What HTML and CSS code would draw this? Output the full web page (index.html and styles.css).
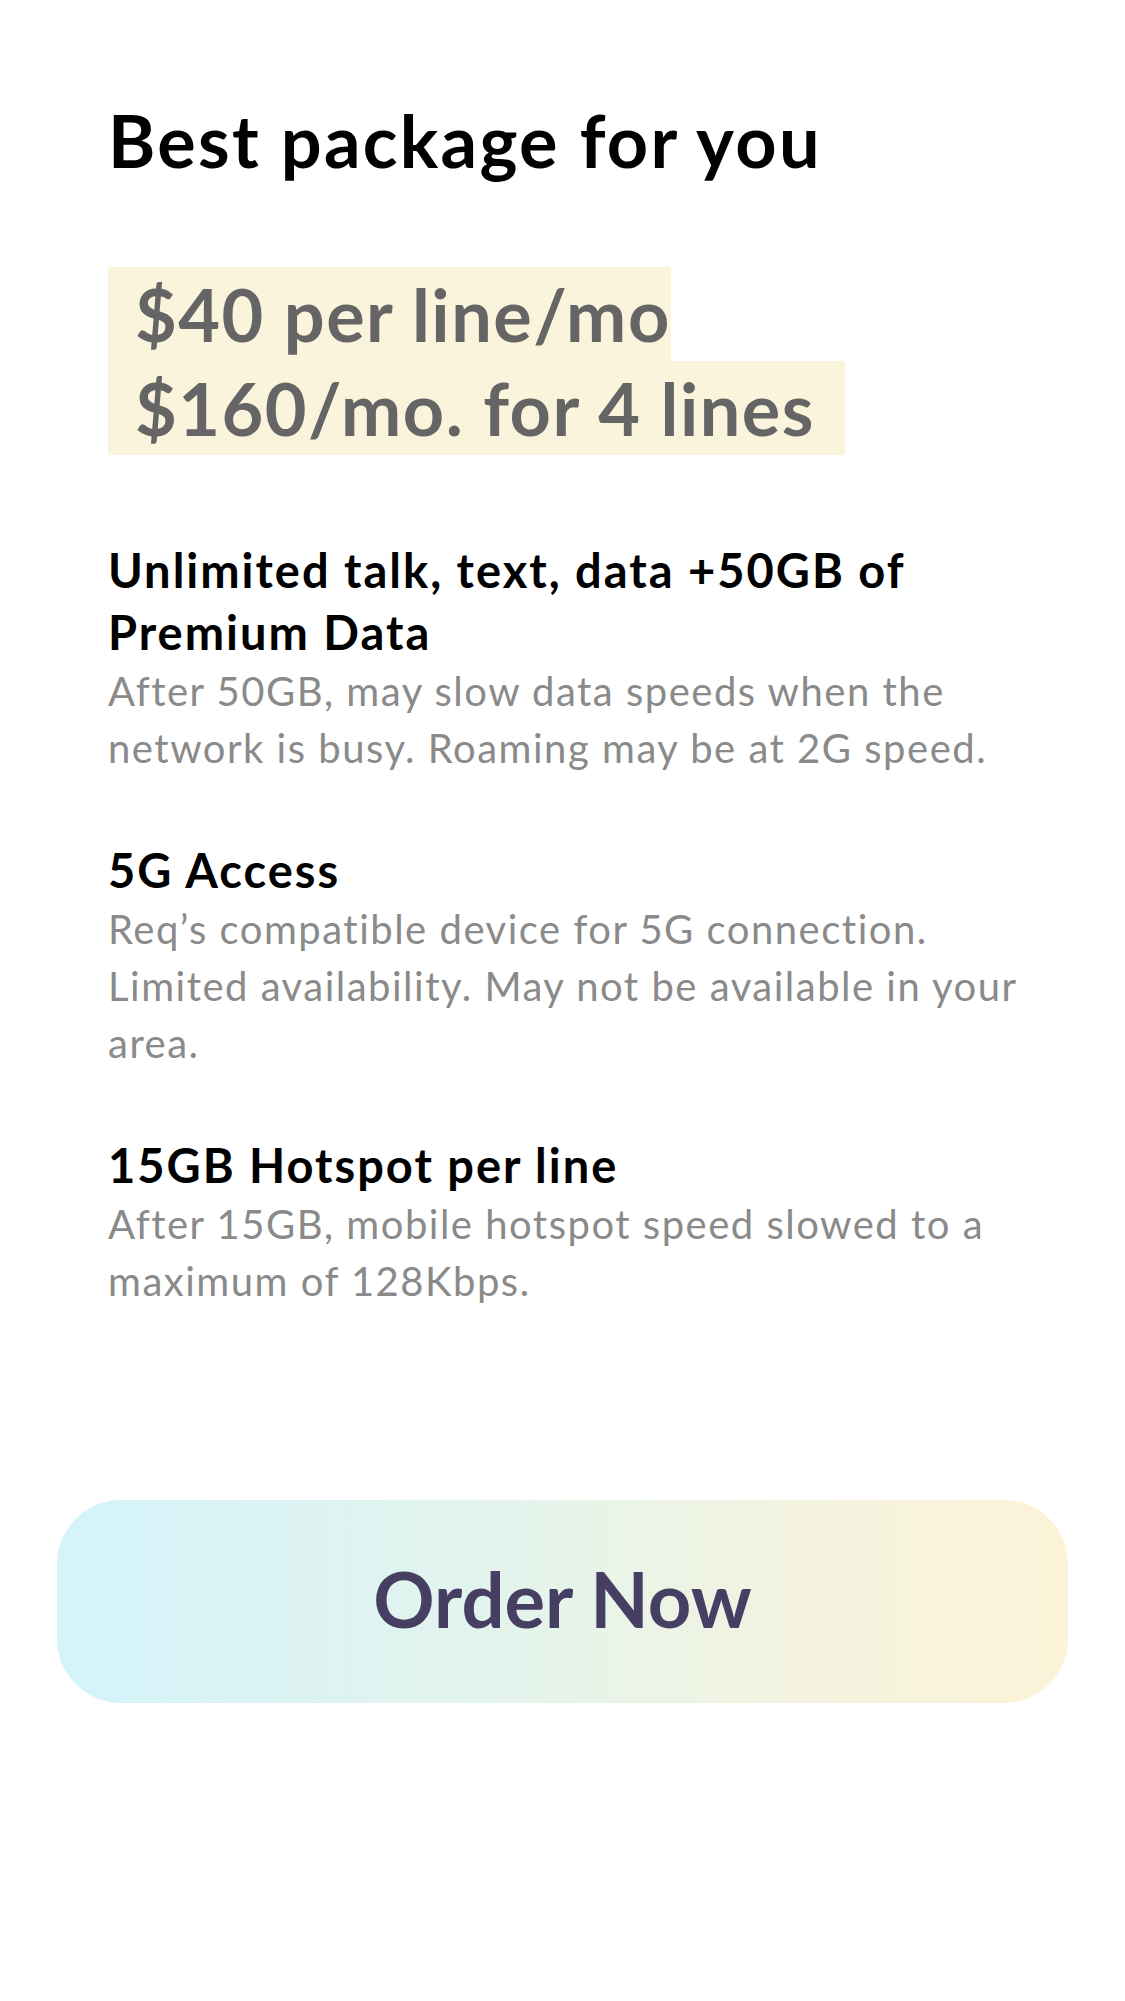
FILE: index.html
```html
<!DOCTYPE html>
<html lang="en">
<head>
<meta charset="utf-8">
<title>Best package for you</title>
<link rel="stylesheet" href="styles.css">
</head>
<body>
<main class="page">
  <section class="content">
    <h1 class="title">Best package for you</h1>
    <div class="price">
      <span class="price-line">$40 per line/mo</span>
      <span class="price-line price-line--last">$160/mo. for 4 lines</span>
    </div>
    <ul class="features">
      <li class="feature">
        <h2 class="feature-title">Unlimited talk, text, data +50GB of Premium Data</h2>
        <p class="feature-desc">After 50GB, may slow data speeds when the network is busy. Roaming may be at 2G speed.</p>
      </li>
      <li class="feature">
        <h2 class="feature-title">5G Access</h2>
        <p class="feature-desc">Req’s compatible device for 5G connection. Limited availability. May not be available in your area.</p>
      </li>
      <li class="feature">
        <h2 class="feature-title">15GB Hotspot per line</h2>
        <p class="feature-desc">After 15GB, mobile hotspot speed slowed to a maximum of 128Kbps.</p>
      </li>
    </ul>
  </section>
  <div class="cta">
    <button class="order-btn" type="button">Order Now</button>
  </div>
</main>
</body>
</html>
```

FILE: styles.css
```css
* { box-sizing: border-box; }

html, body {
  margin: 0;
  padding: 0;
  background: #ffffff;
}

body {
  font-family: "Lato", "Noto Sans", "Liberation Sans", sans-serif;
  color: #000;
}

.page {
  width: 1125px;
  min-height: 2001px;
}

.content {
  padding: 97px 100px 0 108px;
}

.title {
  margin: 0;
  font-size: 72px;
  line-height: 86px;
  font-weight: 700;
  color: #000;
  letter-spacing: 2.3px;
}

.price {
  margin-top: 84px;
  display: flex;
  flex-direction: column;
  align-items: flex-start;
}

.price-line {
  display: block;
  background: #fbf4dc;
  color: #656565;
  font-size: 72px;
  line-height: 94px;
  font-weight: 700;
  letter-spacing: 1.5px;
  padding-left: 27px;
}

.price-line--last {
  padding-right: 30px;
}

.features {
  list-style: none;
  margin: 84px 0 0 0;
  padding: 0;
  display: flex;
  flex-direction: column;
  gap: 62px;
}

.feature-title {
  margin: 0;
  font-size: 47px;
  line-height: 62px;
  font-weight: 700;
  letter-spacing: 2px;
  color: #000;
}

.feature-desc {
  margin: 0;
  font-size: 40px;
  line-height: 57px;
  font-weight: 400;
  letter-spacing: 1.5px;
  color: #8a8a8a;
}

.cta {
  padding: 190px 57px 0 57px;
}

.order-btn {
  display: flex;
  align-items: center;
  justify-content: center;
  width: 100%;
  height: 203px;
  border: none;
  border-radius: 64px;
  background: linear-gradient(90deg, #d4f3fb 0%, #e4f4ec 45%, #f4f3df 75%, #fcf3d8 100%);
  font-family: "Lato", "Noto Sans", "Liberation Sans", sans-serif;
  font-size: 76px;
  font-weight: 700;
  color: #463f63;
  padding: 0 0 6px 0;
  cursor: pointer;
}
```
